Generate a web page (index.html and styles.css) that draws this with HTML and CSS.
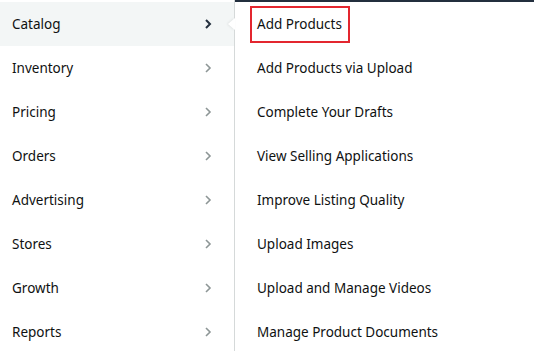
FILE: index.html
```html
<!DOCTYPE html>
<html lang="en">
<head>
    <meta charset="UTF-8">
    <title>Menu</title>
    <link rel="stylesheet" href="styles.css">
</head>
<body>
<div class="menu">
    <ul class="categories">
        <li class="cat active">Catalog <svg class="chev" viewBox="0 0 8 12"><polyline points="2,2 6,6 2,10"/></svg></li>
        <li class="cat">Inventory <svg class="chev" viewBox="0 0 8 12"><polyline points="2,2 6,6 2,10"/></svg></li>
        <li class="cat">Pricing <svg class="chev" viewBox="0 0 8 12"><polyline points="2,2 6,6 2,10"/></svg></li>
        <li class="cat">Orders <svg class="chev" viewBox="0 0 8 12"><polyline points="2,2 6,6 2,10"/></svg></li>
        <li class="cat">Advertising <svg class="chev" viewBox="0 0 8 12"><polyline points="2,2 6,6 2,10"/></svg></li>
        <li class="cat">Stores <svg class="chev" viewBox="0 0 8 12"><polyline points="2,2 6,6 2,10"/></svg></li>
        <li class="cat">Growth <svg class="chev" viewBox="0 0 8 12"><polyline points="2,2 6,6 2,10"/></svg></li>
        <li class="cat">Reports <svg class="chev" viewBox="0 0 8 12"><polyline points="2,2 6,6 2,10"/></svg></li>
    </ul>
    <ul class="links">
        <li class="link"><span class="highlight">Add Products</span></li>
        <li class="link">Add Products via Upload</li>
        <li class="link">Complete Your Drafts</li>
        <li class="link">View Selling Applications</li>
        <li class="link">Improve Listing Quality</li>
        <li class="link">Upload Images</li>
        <li class="link">Upload and Manage Videos</li>
        <li class="link">Manage Product Documents</li>
    </ul>
</div>
</body>
</html>
```

FILE: styles.css
```css
body {
    margin: 0;
    background: #fff;
    font-family: 'Noto Sans', 'Open Sans', sans-serif;
    font-size: 13.5px;
    color: #0f1111;
}
ul {
    list-style: none;
    margin: 0;
    padding: 0;
}
.menu {
    display: flex;
    height: 351px;
    overflow: hidden;
}
.categories {
    width: 234px;
    padding-top: 2px;
    border-right: 1px solid #d5d9d9;
}
.cat {
    position: relative;
    display: flex;
    align-items: center;
    justify-content: space-between;
    height: 44px;
    padding: 0 22px 0 12px;
}
.cat.active {
    background: #f3f6f6;
}
.cat.active::after {
    content: "";
    position: absolute;
    right: -1px;
    top: 16px;
    border-top: 6px solid transparent;
    border-bottom: 6px solid transparent;
    border-right: 7px solid #fff;
    filter: drop-shadow(-1px 0 1px rgba(0, 0, 0, 0.08));
}
.chev {
    width: 8px;
    height: 12px;
    fill: none;
    stroke: #8d9696;
    stroke-width: 1.6;
}
.cat.active .chev {
    stroke: #232f3e;
    stroke-width: 2;
}
.links {
    flex: 1;
    border-top: 2px solid #232f3e;
}
.link {
    display: flex;
    align-items: center;
    height: 44px;
    padding-left: 22px;
}
.highlight {
    outline: 2px solid #e3262f;
    padding: 7px 6px 8px 5px;
    margin-left: -5px;
}
```
